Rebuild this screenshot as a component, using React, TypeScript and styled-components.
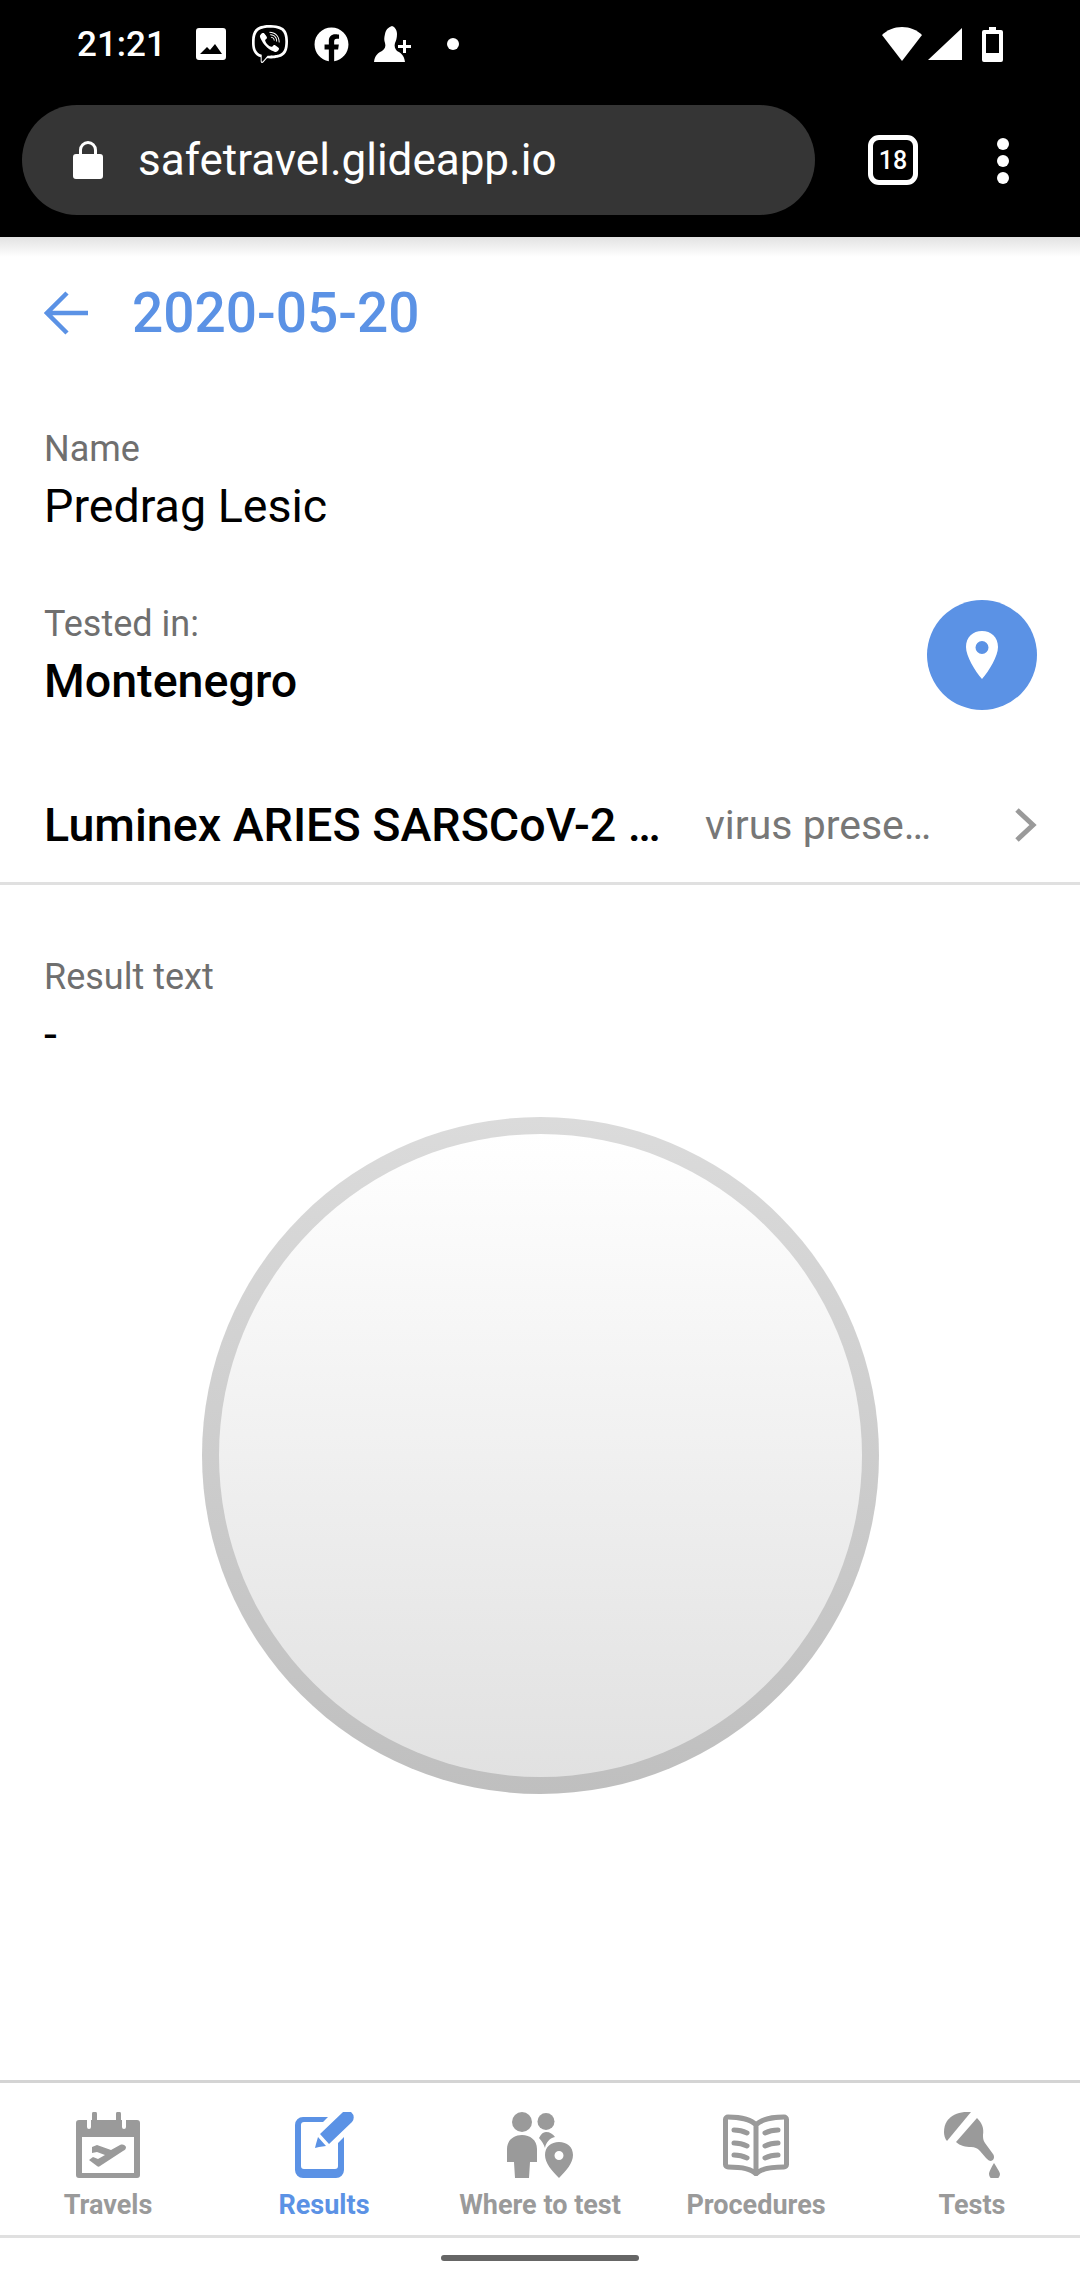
import * as React from 'react'
import styled, { createGlobalStyle } from 'styled-components'
import { FaViber, FaFacebook } from 'react-icons/fa'

const blue = '#5b92e5'
const navGray = '#9a9a9a'

const GlobalStyle = createGlobalStyle`
  html, body {
    margin: 0;
    padding: 0;
    background: #fff;
  }
  * {
    box-sizing: border-box;
  }
`

const Page = styled.div`
  width: 1080px;
  height: 2280px;
  display: flex;
  flex-direction: column;
  overflow: hidden;
  background: #fff;
  font-family: Roboto, 'Liberation Sans', sans-serif;
`

const StatusBar = styled.div`
  height: 88px;
  background: #000;
  color: #fff;
  display: flex;
  align-items: center;
  padding: 0 77px 0 77px;
  flex-shrink: 0;
`

const Time = styled.div`
  font-size: 35px;
  font-weight: 500;
  margin-right: 30px;
`

const StatusIcons = styled.div`
  display: flex;
  align-items: center;
  gap: 25px;
`

const StatusRight = styled.div`
  margin-left: auto;
  display: flex;
  align-items: center;
  gap: 6px;
`

const Dot = styled.div`
  width: 12px;
  height: 12px;
  border-radius: 50%;
  background: #fff;
  margin-left: 9px;
`

const Toolbar = styled.div`
  height: 149px;
  background: #000;
  display: flex;
  align-items: flex-start;
  padding: 17px 0 0 22px;
  flex-shrink: 0;
`

const UrlPill = styled.div`
  width: 793px;
  height: 110px;
  border-radius: 55px;
  background: #353535;
  display: flex;
  align-items: center;
  padding-left: 51px;
  gap: 35px;
`

const UrlText = styled.div`
  color: #fff;
  font-size: 44px;
`

const TabCount = styled.div`
  width: 50px;
  height: 50px;
  margin: 30px 0 0 53px;
  border: 5px solid #fff;
  border-radius: 11px;
  color: #fff;
  font-size: 25px;
  font-weight: 500;
  display: flex;
  align-items: center;
  justify-content: center;
`

const MoreButton = styled.div`
  margin: 33px 0 0 79px;
  display: flex;
  flex-direction: column;
  gap: 5px;
`

const MoreDot = styled.div`
  width: 12px;
  height: 12px;
  border-radius: 50%;
  background: #fff;
`

const Content = styled.div`
  flex: 1;
  display: flex;
  flex-direction: column;
  background: linear-gradient(#e2e2e2, #fff 20px);
`

const Header = styled.div`
  height: 150px;
  margin-bottom: 42px;
  padding: 2px 0 0 44px;
  display: flex;
  align-items: center;
  gap: 44px;
  color: ${blue};
`

const Title = styled.div`
  font-size: 55px;
  font-weight: 500;
`

const Field = styled.div`
  padding: 0 44px;
`

const FieldRow = styled.div`
  display: flex;
  align-items: center;
  justify-content: space-between;
  padding: 0 43px 0 44px;
  margin-top: 68px;
`

const FieldLabel = styled.div`
  font-size: 36px;
  line-height: 40px;
  color: #6f6f6f;
`

const FieldValue = styled.div<{ $strong?: boolean }>`
  font-size: 46.6px;
  line-height: 52px;
  margin-top: 11px;
  color: #000;
  font-weight: ${({ $strong }) => ($strong ? 500 : 400)};
`

const MapButton = styled.div`
  width: 110px;
  height: 110px;
  border-radius: 50%;
  background: ${blue};
  display: flex;
  align-items: center;
  justify-content: center;
`

const ListRow = styled.div`
  height: 117px;
  margin-top: 58px;
  padding: 0 43px 0 44px;
  display: flex;
  align-items: center;
  border-bottom: 3px solid #e0e0e0;
`

const ListTitle = styled.div`
  width: 617px;
  font-size: 46.6px;
  font-weight: 500;
  color: #000;
  white-space: nowrap;
`

const ListValue = styled.div`
  margin-left: 44px;
  width: 226px;
  font-size: 41px;
  color: #777;
  white-space: nowrap;
`

const Chevron = styled.div`
  margin-left: auto;
  display: flex;
`

const ResultField = styled(Field)`
  margin-top: 72px;
`

const CircleRing = styled.div`
  width: 677px;
  height: 677px;
  margin: 57px auto 0;
  border-radius: 50%;
  padding: 17px;
  background: linear-gradient(#dbdbdb, #bfbfbf);
`

const CircleFill = styled.div`
  width: 100%;
  height: 100%;
  border-radius: 50%;
  background: linear-gradient(#ffffff, #e1e1e1);
`

const Nav = styled.div`
  height: 158px;
  flex-shrink: 0;
  display: grid;
  grid-template-columns: repeat(5, 216px);
  border-top: 3px solid #d4d4d4;
  border-bottom: 3px solid #e0e0e0;
`

const NavItem = styled.div<{ $active?: boolean }>`
  display: flex;
  flex-direction: column;
  align-items: center;
  padding-top: 29px;
  color: ${({ $active }) => ($active ? blue : navGray)};
`

const NavIcon = styled.div`
  height: 66px;
  display: flex;
  align-items: center;
`

const NavLabel = styled.div`
  font-size: 27px;
  line-height: 28px;
  font-weight: 700;
  margin-top: 13px;
  white-space: nowrap;
`

const HomeArea = styled.div`
  height: 42px;
  flex-shrink: 0;
  display: flex;
  justify-content: center;
  padding-top: 17px;
`

const HomeIndicator = styled.div`
  width: 198px;
  height: 6px;
  border-radius: 3px;
  background: #666;
`

const BackArrow = () => (
  <svg width="44" height="44" viewBox="0 0 44 44" fill="none" stroke="currentColor" strokeWidth="4.5">
    <path d="M44 22H4M23 2 3 22l20 20" />
  </svg>
)

const PictureIcon = () => (
  <svg width="30" height="32" viewBox="0 0 30 32" fill="#fff">
    <path fillRule="evenodd" d="M3 0h24a3 3 0 0 1 3 3v26a3 3 0 0 1-3 3H3a3 3 0 0 1-3-3V3a3 3 0 0 1 3-3Zm1 26h22l-7-10-5 6-3-3Z" />
  </svg>
)

const PersonAddIcon = () => (
  <svg width="39" height="36" viewBox="0 0 39 36" fill="#fff">
    <path d="M18 0c3 1 5 4 5 8 0 4-1 7-2 9-1 3 0 6 2 8 4 2 7 4 8 11H0c1-7 4-9 8-11 3-2 4-5 3-8-1-3-1-5 0-9 1-5 4-7 7-8Z" />
    <path d="M29 14h3v5h5v3h-5v5h-3v-5h-5v-3h5Z" />
  </svg>
)

const WifiIcon = () => (
  <svg width="40" height="34" viewBox="0 0 40 34" fill="#fff">
    <path d="M0 8C5 3 12 0 20 0s15 3 20 8L20 34Z" />
  </svg>
)

const SignalIcon = () => (
  <svg width="34" height="32" viewBox="0 0 34 32" fill="#fff">
    <path d="M34 0v32H0Z" />
  </svg>
)

const BatteryIcon = () => (
  <svg width="21" height="35" viewBox="0 0 21 35" fill="#fff" style={{ marginLeft: 14 }}>
    <path fillRule="evenodd" d="M7 0h7v3h5a2 2 0 0 1 2 2v28a2 2 0 0 1-2 2H2a2 2 0 0 1-2-2V5a2 2 0 0 1 2-2h5Zm-3 7v19h13V7Z" />
  </svg>
)

const LockIcon = () => (
  <svg width="30" height="38" viewBox="0 0 30 38" fill="#fff">
    <path fillRule="evenodd" d="M3 13h3V9a9 9 0 0 1 18 0v4h3a3 3 0 0 1 3 3v19a3 3 0 0 1-3 3H3a3 3 0 0 1-3-3V16a3 3 0 0 1 3-3Zm6 0h12V9a6 6 0 0 0-12 0Z" />
  </svg>
)

const PinIcon = () => (
  <svg width="32" height="48" viewBox="0 0 32 48" fill="#fff">
    <path fillRule="evenodd" d="M16 0c9 0 16 6 16 16 0 9-9 24-16 32C9 40 0 25 0 16 0 6 7 0 16 0Zm0 10a6.5 6.5 0 1 0 0 13 6.5 6.5 0 0 0 0-13Z" />
  </svg>
)

const ChevronIcon = () => (
  <svg width="24" height="34" viewBox="0 0 24 34" fill="none" stroke="#9a9a9a" strokeWidth="5">
    <path d="M4 2l16 15L4 32" />
  </svg>
)

const TravelsIcon = () => (
  <svg width="64" height="66" viewBox="0 0 64 66" fill="currentColor">
    <path fillRule="evenodd" d="M3 8h8v7a2 2 0 0 0 4 0V8h1V2a2.5 2.5 0 0 1 5 0v6h19V2a2.500 2.500 0 0 1 5 0v6h1v7a2 2 0 0 0 4 0V8h11a3 3 0 0 1 3 3v52a3 3 0 0 1-3 3H3a3 3 0 0 1-3-3V11a3 3 0 0 1 3-3Zm3 17v36h52V25Z" />
    <path d="M18 35l5-2 14 5 9-5c3-1 5 0 6 2 0 2-1 3-3 4L26 54c-1 1-2 1-3 0l-8-6 4-3 5 2 7-4-8-3-5 1Z" transform="translate(-2 0)" />
  </svg>
)

const ResultsIcon = () => (
  <svg width="59" height="66" viewBox="0 0 59 66" fill="currentColor">
    <path d="M8 5h25l-5 5H9a3 3 0 0 0-3 3v41a3 3 0 0 0 3 3h31a3 3 0 0 0 3-3V31l6-6v33a8 8 0 0 1-8 8H8a8 8 0 0 1-8-8V13a8 8 0 0 1 8-8Z" />
    <path d="M47 1a6.500 6.500 0 0 1 10 9L34 32l-9-10ZM23 25l8 9-7 1-4 1 1-4Z" />
  </svg>
)

const WhereIcon = () => (
  <svg width="66" height="66" viewBox="0 0 66 66" fill="currentColor">
    <ellipse cx="15" cy="10" rx="10" ry="10" />
    <ellipse cx="39" cy="9.500" rx="8.500" ry="8.500" />
    <path d="M15 23c8 0 15 5 15 14v13h-7l-1 16H8L7 50H0V37c0-9 7-14 15-14Z" />
    <path d="M39 20c4 0 7 2 9 5-5 1-9 5-10 11-1-3-3-7-6-10 2-4 4-6 7-6Z" />
    <path fillRule="evenodd" d="M52 30c8 0 14 5 14 13 0 8-7 16-14 23-7-7-14-15-14-23 0-8 6-13 14-13Zm0 9a4.500 4.500 0 1 0 0 9 4.500 4.500 0 0 0 0-9Z" />
  </svg>
)

const BookIcon = () => (
  <svg width="66" height="62" viewBox="0 0 66 62" fill="none" stroke="currentColor" strokeWidth="5" strokeLinecap="round" strokeLinejoin="round">
    <path d="M33 11C28 5 15 3 5 3a2.500 2.500 0 0 0-2.500 2.500v45A2.500 2.500 0 0 0 5 53c11 0 23 1 28 7 5-6 17-7 28-7a2.500 2.500 0 0 0 2.500-2.500v-45A2.500 2.500 0 0 0 61 3C51 3 38 5 33 11v47" />
    <path d="M11 16c5 0 9 1 13 3M11 29c5 0 9 1 13 3M11 41c5 0 9 1 13 3M55 16c-5 0-9 1-13 3M55 29c-5 0-9 1-13 3M55 41c-5 0-9 1-13 3" />
  </svg>
)

const TestsIcon = () => (
  <svg width="56" height="66" viewBox="0 0 56 66" fill="currentColor">
    <path d="M27 0 3 29C-1 25-1 15 3 9 8 2 18-1 27 0Z" />
    <path d="M33 6c5 5 7 10 6 17 0 3 0 5 2 8l8 11c2 3 1 6-2 7-2 0-3-1-5-3l-6-7c-3-3-5-4-9-4-5 0-11-1-15-5L33 6Z" />
    <path d="M50 51c3 5 6 9 6 11a5 5 0 0 1-11 0c0-2 2-6 5-11Z" />
  </svg>
)

const navItems = [
  { label: 'Travels', Icon: TravelsIcon },
  { label: 'Results', Icon: ResultsIcon, active: true },
  { label: 'Where to test', Icon: WhereIcon },
  { label: 'Procedures', Icon: BookIcon },
  { label: 'Tests', Icon: TestsIcon },
]

const App = () => {
  return (
    <Page>
      <GlobalStyle />
      <StatusBar>
        <Time>21:21</Time>
        <StatusIcons>
          <PictureIcon />
          <FaViber size={38} />
          <FaFacebook size={35} />
          <PersonAddIcon />
          <Dot />
        </StatusIcons>
        <StatusRight>
          <WifiIcon />
          <SignalIcon />
          <BatteryIcon />
        </StatusRight>
      </StatusBar>

      <Toolbar>
        <UrlPill>
          <LockIcon />
          <UrlText>safetravel.glideapp.io</UrlText>
        </UrlPill>
        <TabCount>18</TabCount>
        <MoreButton>
          <MoreDot />
          <MoreDot />
          <MoreDot />
        </MoreButton>
      </Toolbar>

      <Content>
        <Header>
          <BackArrow />
          <Title>2020-05-20</Title>
        </Header>

        <Field>
          <FieldLabel>Name</FieldLabel>
          <FieldValue>Predrag Lesic</FieldValue>
        </Field>

        <FieldRow>
          <div>
            <FieldLabel>Tested in:</FieldLabel>
            <FieldValue $strong>Montenegro</FieldValue>
          </div>
          <MapButton>
            <PinIcon />
          </MapButton>
        </FieldRow>

        <ListRow>
          <ListTitle>Luminex ARIES SARSCoV-2 …</ListTitle>
          <ListValue>virus prese…</ListValue>
          <Chevron>
            <ChevronIcon />
          </Chevron>
        </ListRow>

        <ResultField>
          <FieldLabel>Result text</FieldLabel>
          <FieldValue>-</FieldValue>
        </ResultField>

        <CircleRing>
          <CircleFill />
        </CircleRing>
      </Content>

      <Nav>
        {navItems.map(({ label, Icon, active }) => (
          <NavItem key={label} $active={active}>
            <NavIcon>
              <Icon />
            </NavIcon>
            <NavLabel>{label}</NavLabel>
          </NavItem>
        ))}
      </Nav>

      <HomeArea>
        <HomeIndicator />
      </HomeArea>
    </Page>
  )
}

export default App
